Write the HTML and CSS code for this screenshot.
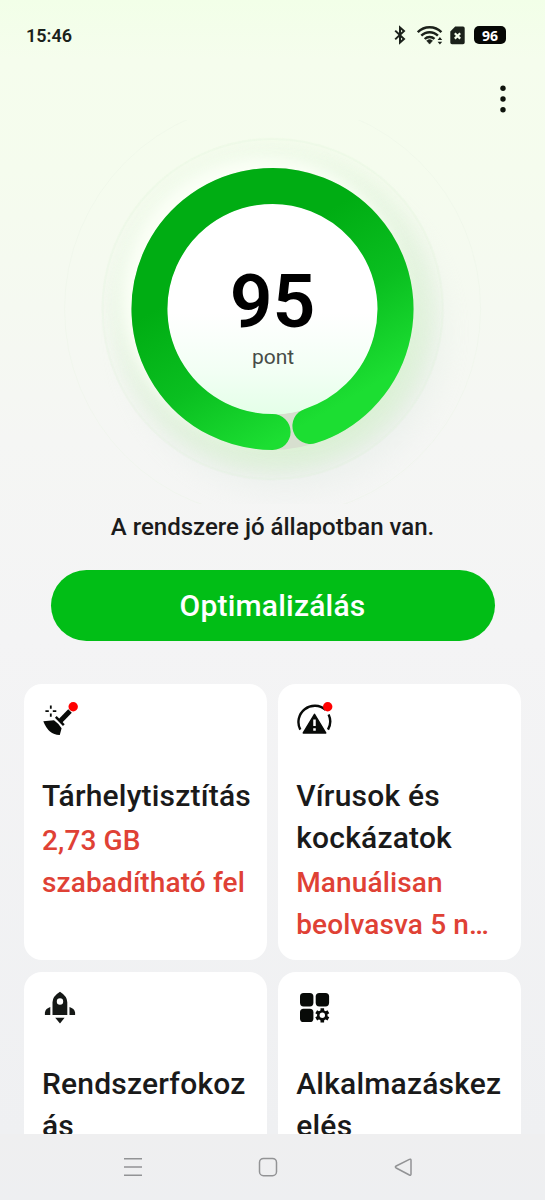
FILE: index.html
```html
<!DOCTYPE html>
<html lang="hu">
<head>
<meta charset="utf-8">
<title>Telefonkezelő</title>
<link rel="stylesheet" href="styles.css">
</head>
<body>
<div class="phone">
  <header class="status">
    <span class="clock">15:46</span>
    <svg class="bluetooth" width="12" height="20" viewBox="0 0 12 20"><path d="M1.200 5.600 10 14 6 17.600V2.400L10 6 1.200 14.400" fill="none" stroke="#1b211a" stroke-width="2"/></svg>
    <svg class="wifi" width="26" height="20" viewBox="0 0 26 20"><g fill="none" stroke="#1b211a" stroke-width="2.400"><path d="M.8 7.200a16.500 16.500 0 0 1 23.600 0"/><path d="M4.300 10.700a11.700 11.700 0 0 1 16.600 0"/><path d="M7.700 14a7 7 0 0 1 9.800-.1"/></g><path d="M9.700 15.700q2.900-2.200 5.800 0l-2.900 3.400z" fill="#1b211a" stroke="#1b211a" stroke-width=".6"/><path d="m20.600 15 2.300-2.900 2.300 2.900zm0 1.700h4.600l-2.300 2.900z" fill="#1b211a"/></svg>
    <svg class="sim" width="15" height="19" viewBox="0 0 15 19"><path d="M5.200.5H13a1.700 1.700 0 0 1 1.700 1.700v14.300a1.700 1.700 0 0 1-1.700 1.700H2A1.700 1.700 0 0 1 .3 16.500V5.400z" fill="#1b211a"/><path d="m4.800 7.200 5.400 5.400m0-5.400-5.400 5.400" stroke="#f5fdec" stroke-width="2.200"/></svg>
    <span class="battery">96</span>
  </header>
  <div class="toolbar">
    <svg width="8" height="30" viewBox="0 0 8 30"><g fill="#0e130c"><circle cx="4" cy="4.300" r="2.700"/><circle cx="4" cy="15" r="2.700"/><circle cx="4" cy="25.700" r="2.700"/></g></svg>
  </div>
  <section class="score">
    <svg class="gauge" width="545" height="384" viewBox="0 120 545 384">
      <defs>
        <linearGradient id="arc" gradientUnits="userSpaceOnUse" x1="243" y1="259" x2="330" y2="410"><stop offset="0" stop-color="#00ad13"/><stop offset=".5" stop-color="#0abf20"/><stop offset="1" stop-color="#1cde32"/></linearGradient>
        <linearGradient id="disc" x1="0" y1="0" x2="0" y2="1"><stop offset=".52" stop-color="#fff"/><stop offset=".8" stop-color="#f2fff4"/><stop offset="1" stop-color="#e4ffe8"/></linearGradient>
        <linearGradient id="halo" x1=".2" y1=".1" x2=".65" y2="1"><stop offset="0" stop-color="#e4f8df" stop-opacity=".55"/><stop offset=".5" stop-color="#ddf3d6" stop-opacity=".7"/><stop offset="1" stop-color="#d6efcf"/></linearGradient>
        <radialGradient id="fade" gradientUnits="userSpaceOnUse" cx="272.600" cy="309" r="172"><stop offset=".8" stop-color="#fff"/><stop offset=".9" stop-color="#fff" stop-opacity=".6"/><stop offset="1" stop-color="#fff" stop-opacity=".05"/></radialGradient>
        <mask id="haloMask"><circle cx="272.600" cy="309" r="172" fill="url(#fade)"/></mask>
        <filter id="soft" x="-30%" y="-30%" width="160%" height="160%"><feGaussianBlur stdDeviation="15"/></filter>
        <filter id="glow" x="-30%" y="-30%" width="160%" height="160%"><feGaussianBlur stdDeviation="7"/></filter>
      </defs>
      <circle cx="285" cy="332" r="158" fill="#dfe9e2" opacity=".4" filter="url(#soft)"/>
      <circle cx="272.600" cy="309" r="208" fill="none" stroke="#eaf5e6" stroke-opacity=".45"/>
      <circle cx="272.600" cy="309" r="172" fill="url(#halo)" mask="url(#haloMask)"/>
      <circle cx="272.600" cy="309" r="170" fill="none" stroke="#d8f0d2" stroke-width="2" stroke-opacity=".15"/>
      <circle cx="264" cy="299" r="142" fill="#fbfff6" filter="url(#glow)"/>
      <circle cx="272.600" cy="309" r="123" fill="none" stroke="#d7dfcf" stroke-width="36"/>
      <circle cx="272.600" cy="309" r="105.500" fill="url(#disc)"/>
      <path d="M272.600 432A123 123 0 1 1 310.400 426" fill="none" stroke="url(#arc)" stroke-width="36" stroke-linecap="round"/>
    </svg>
    <div class="reading">
      <span class="value">95</span>
      <span class="unit">pont</span>
    </div>
  </section>
  <p class="summary">A rendszere jó állapotban van.</p>
  <button class="optimize">Optimalizálás</button>
  <main class="cards">
    <article class="card">
      <svg class="icon" width="36" height="36" viewBox="0 0 36 36"><path d="M1.300 19.300 12 18.300q5 3.500 7.600 8l-1.800 6.600q-11.200.2-16.500-13.600z" fill="#080a08"/><path d="m13.800 14.800 8 8.300" stroke="#080a08" stroke-width="2.400"/><path d="M18.300 18.900 28 9" stroke="#080a08" stroke-width="5"/><path d="M8.800 3.500v3.300m0 4.600v3.400M3.400 9.100h3.400m4 0h3.500" stroke="#080a08" stroke-width="1.800"/><circle cx="31.200" cy="4.700" r="4.700" fill="#f00"/></svg>
      <h2>Tárhelytisztítás</h2>
      <p>2,73 GB szabadítható fel</p>
    </article>
    <article class="card">
      <svg class="icon" width="37" height="36" viewBox="0 0 37 36"><path d="M4.300 27.600A16.300 16.300 0 0 1 29.600 7.900M32.600 12.400a16.500 16.500 0 0 1-.6 15.200" fill="none" stroke="#080a08" stroke-width="2.400"/><path d="M18.500 12.400 29.700 31H7.300z" fill="#080a08" stroke="#080a08" stroke-width="1.500" stroke-linejoin="round"/><path d="M18.500 17.500V24m0 2.200v2.600" stroke="#fff" stroke-width="2.500"/><circle cx="31.700" cy="4.700" r="4.700" fill="#f00"/></svg>
      <h2>Vírusok és kockázatok</h2>
      <p>Manuálisan beolvasva 5 n…</p>
    </article>
    <article class="card">
      <svg class="icon" width="36" height="36" viewBox="0 0 36 36"><path fill-rule="evenodd" d="M18 1.800q7.300 4.600 7.300 10.500v12.800H10.500V12.300Q10.500 6.400 18 1.800zM18 8.300a3.200 3.200 0 1 0 0 6.400 3.200 3.200 0 0 0 0-6.400zM8.300 17v8.100H2.900v-2.700Q3.700 18.500 8.300 17zM27.500 17v8.100h5.600v-2.700q-.8-3.900-5.600-5.400zM13.200 27.800h9.400L18 33.500z" fill="#151816"/></svg>
      <h2>Rendszerfokozás</h2>
    </article>
    <article class="card">
      <svg class="icon" width="36" height="36" viewBox="0 0 36 36"><g fill="#080a08"><rect x="4" y="3" width="13.400" height="13.400" rx="3.600"/><rect x="19.700" y="3" width="13.400" height="13.400" rx="3.600"/><rect x="4" y="18.700" width="13.400" height="13.400" rx="3.600"/><circle cx="26.300" cy="25.300" r="5.200"/><path d="M26.300 18.200v14.200M20.200 21.750l12.200 7.100M20.200 28.850l12.200-7.100" stroke="#080a08" stroke-width="3.600"/></g><circle cx="26.300" cy="25.300" r="2.700" fill="#fff"/></svg>
      <h2>Alkalmazáskezelés</h2>
    </article>
  </main>
  <nav class="nav">
    <svg width="20" height="20" viewBox="0 0 20 20"><path d="M1 1.800h18M1 10h18M1 18.200h18"/></svg>
    <svg width="20" height="20" viewBox="0 0 20 20"><rect x="1.500" y="1.400" width="17" height="17.300" rx="4"/></svg>
    <svg width="20" height="20" viewBox="0 0 20 20"><path d="M16.400 2.400 3.200 9q-1.700 1 0 2l13.200 7q1.600.8 1.600-.9V3.300q0-1.700-1.600-.9z"/></svg>
  </nav>
</div>
</body>
</html>
```
FILE: styles.css
```css
* { box-sizing: border-box; }
body { margin: 0; font-family: Roboto, "Liberation Sans", sans-serif; }
h2, p { margin: 0; }
svg { display: block; flex: none; }

.phone {
  display: flex;
  flex-direction: column;
  width: 545px;
  height: 1200px;
  overflow: hidden;
  background: linear-gradient(#f2ffe8 0, #f5fded 60px, #f5fcee 170px, #f5f6f4 440px, #f4f4f5 640px, #eff0f2 1134px);
}

.status { display: flex; align-items: center; height: 70px; padding: 0 39px 0 26px; flex: none; }
.clock { margin-right: auto; font-size: 18px; font-weight: 600; color: #1b211a; }
.wifi { margin-left: 11px; }
.sim { margin-left: 7px; }
.battery {
  display: flex;
  align-items: center;
  justify-content: center;
  width: 32px;
  height: 18px;
  margin-left: 9px;
  border-radius: 5px;
  background: #050704;
  color: #fff;
  font-family: "Open Sans", sans-serif;
  font-size: 14px;
  font-weight: 700;
}

.toolbar { display: flex; justify-content: flex-end; height: 50px; padding: 14px 38px 0 0; flex: none; }

.score { display: grid; height: 384px; flex: none; }
.gauge, .reading { grid-area: 1 / 1; }
.reading { z-index: 1; display: flex; flex-direction: column; align-items: center; padding-top: 138px; }
.value { font-size: 75px; line-height: 86px; font-weight: 600; color: #000; }
.unit { margin: 1px 0 0 1px; font-size: 21px; line-height: 24px; color: #464c47; }

.summary { flex: none; height: 66px; padding-top: 8px; text-align: center; font-size: 24px; line-height: 30px; font-weight: 500; color: #1b1b1b; }

.optimize {
  flex: none;
  width: 444px;
  height: 71px;
  margin: 0 auto;
  padding: 0;
  border: 0;
  border-radius: 36px;
  background: #01be16;
  color: #fff;
  font: 500 30px/71px Roboto, sans-serif;
  letter-spacing: .2px;
}

.cards {
  flex: 1;
  min-height: 0;
  display: grid;
  grid-template-columns: 1fr 1fr;
  grid-auto-rows: 275.500px;
  gap: 12px 11.500px;
  margin-top: 43px;
  padding: 0 24px;
  overflow: hidden;
}
.card { padding: 18px 12px 0 18px; border-radius: 18px; background: #fff; }
.card h2 { margin-top: 37px; font-size: 30px; line-height: 42px; font-weight: 500; letter-spacing: .2px; color: #1a1a1a; overflow-wrap: anywhere; }
.card p { margin-top: 3px; font-size: 28px; line-height: 41.500px; font-weight: 500; letter-spacing: .12px; color: #df4135; }

.nav { display: flex; justify-content: center; align-items: center; gap: 115px; flex: none; height: 66px; padding-right: 10px; background: linear-gradient(#efeff0, #eeeff1); }
.nav svg { fill: none; stroke: #929395; stroke-width: 1.500; }
```
